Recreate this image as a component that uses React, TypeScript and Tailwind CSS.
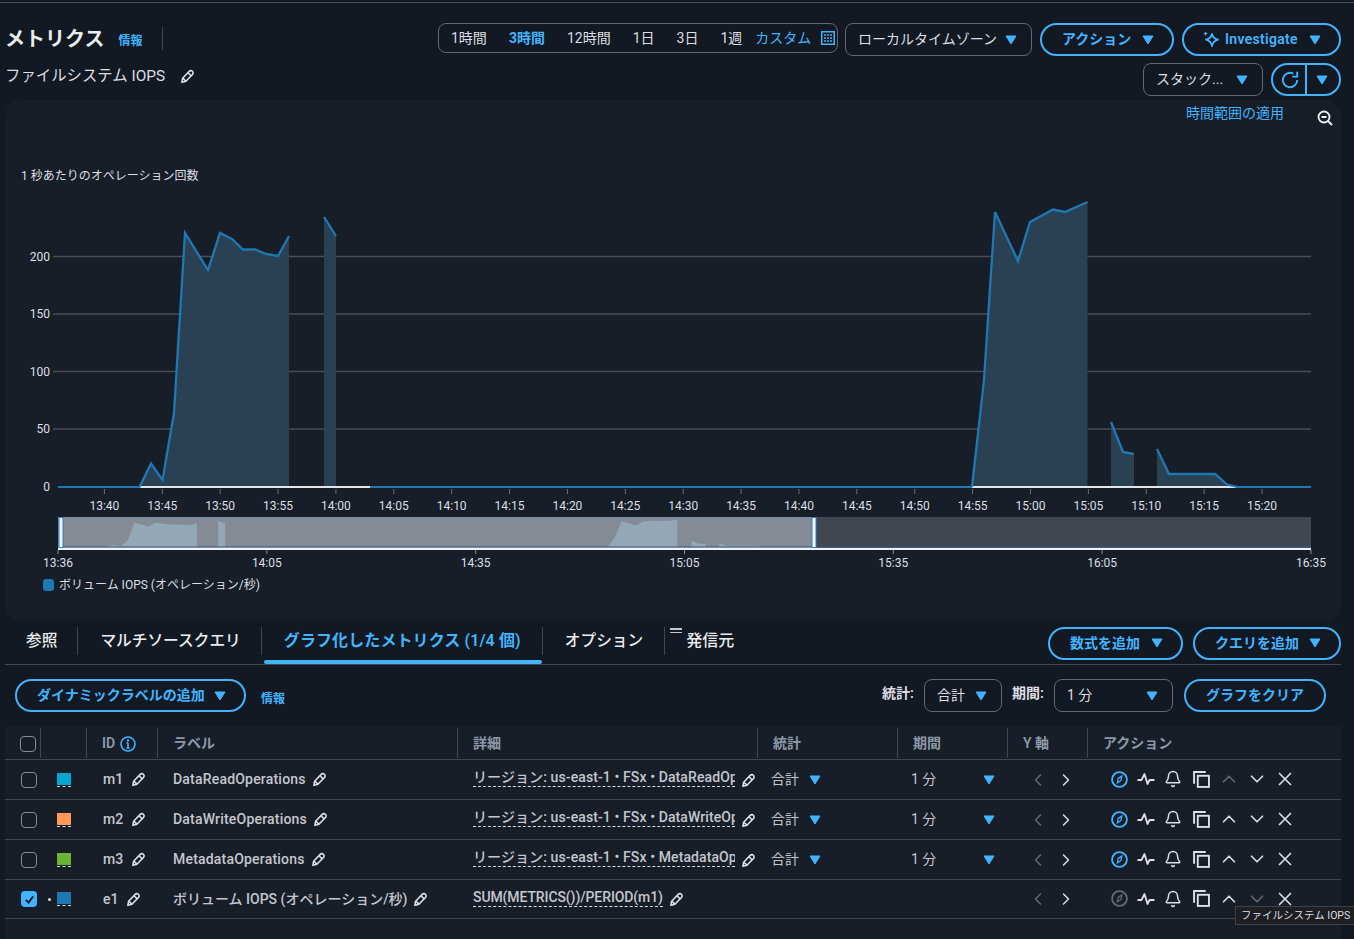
import { Bell, ChevronLeft, ChevronRight, ChevronUp, ChevronDown, X } from "lucide-react";

const baseY = 487;
const seriesA = [[139.5, 487], [151, 463.5], [162.5, 480], [174, 413], [185, 233], [208, 270], [220, 233], [232, 239], [243, 249.5], [255, 249.5], [266, 254], [278, 256], [289, 236]];
const seriesB = [[324, 217], [336, 236]];
const seriesC = [[972, 487], [984, 380], [995, 212], [1018, 261], [1030, 222], [1053, 209.5], [1065, 212], [1087.5, 202]];
const seriesD = [[1111, 422], [1123, 452], [1134, 454]];
const seriesE = [[1157, 449], [1169, 474], [1215, 474], [1227, 484.5], [1238, 487]];
const allSeries = [seriesA, seriesB, seriesC, seriesD, seriesE];

const line = (pts: number[][]) => pts.map((p) => p.join(",")).join(" ");
const area = (pts: number[][]) =>
  `${pts[0][0]},${baseY} ${line(pts)} ${pts[pts.length - 1][0]},${baseY}`;
const mini = (pts: number[][]) =>
  pts.map(([x, y]) => [58 + (x - 58) * 0.6016, 547 - (baseY - y) * 0.095]);

const mainTicks = ["13:40", "13:45", "13:50", "13:55", "14:00", "14:05", "14:10", "14:15", "14:20", "14:25", "14:30", "14:35", "14:40", "14:45", "14:50", "14:55", "15:00", "15:05", "15:10", "15:15", "15:20"];
const miniTicks = ["13:36", "14:05", "14:35", "15:05", "15:35", "16:05", "16:35"];
const gridLines = [
  { label: "200", y: 256.5 },
  { label: "150", y: 314 },
  { label: "100", y: 371.5 },
  { label: "50", y: 429 },
  { label: "0", y: 487 },
];

function Caret({ className = "" }: { className?: string }) {
  return (
    <svg viewBox="0 0 12 10" className={`w-[12px] h-[10px] shrink-0 ${className}`}>
      <path d="M1 1h10L6 9z" fill="#42b4ff" stroke="#42b4ff" strokeLinejoin="round" />
    </svg>
  );
}

function Edit({ className = "" }: { className?: string }) {
  return (
    <svg viewBox="0 0 16 16" className={`w-[15px] h-[15px] shrink-0 ${className}`} fill="none" stroke="#dedee3" strokeWidth="1.7" strokeLinejoin="round">
      <path d="M2 14.200 2.800 9.800 9.800 2.500a2.300 2.300 0 0 1 3.500 3.300L6.300 13z" />
      <path d="M2.800 9.800 6.300 13M8.500 4l3.500 3.300" />
    </svg>
  );
}

function PillButton({ label, width }: { label: string; width: string }) {
  return (
    <button className={`${width} h-[33px] shrink-0 flex items-center justify-between pl-[20px] pr-[18px] rounded-full border-2 border-[#42b4ff] text-[#42b4ff] text-[14px] font-semibold`}>
      <span className="whitespace-nowrap">{label}</span>
      <Caret />
    </button>
  );
}

function Select({ label, width }: { label: string; width: string }) {
  return (
    <div className={`${width} h-[33px] shrink-0 flex items-center justify-between pl-[12px] pr-[14px] rounded-lg border border-[#656871] text-[#dedee3] text-[14px]`}>
      <span className="whitespace-nowrap">{label}</span>
      <Caret />
    </div>
  );
}

function Divider({ className = "" }: { className?: string }) {
  return <div className={`w-px h-[28px] mb-[3px] bg-[#424650] shrink-0 ${className}`} />;
}

function Compass({ disabled }: { disabled?: boolean }) {
  const color = disabled ? "#656871" : "#42b4ff";
  return (
    <svg viewBox="0 0 16 16" className="w-[17px] h-[17px]" fill="none" stroke={color} strokeWidth="1.7">
      <circle cx="8" cy="8" r="7" />
      <path d="M10.200 4.600 9.400 8.900 6 11.200l.7-4.200z" strokeWidth="1.200" />
    </svg>
  );
}

function Pulse() {
  return (
    <svg viewBox="0 0 18 14" className="w-[18px] h-[14px]" fill="none" stroke="#dedee3" strokeWidth="1.8">
      <path d="M0.500 8h4l3-6 3 10 2-4h5" strokeLinejoin="round" />
    </svg>
  );
}

function CopyIcon() {
  return (
    <svg viewBox="0 0 16 16" className="w-[17px] h-[17px]" fill="none" stroke="#dedee3" strokeWidth="1.800">
      <path d="M1 12V1h11" />
      <rect x="4.500" y="4.500" width="10.500" height="10.500" />
    </svg>
  );
}

function Checkbox({ checked }: { checked?: boolean }) {
  if (checked) {
    return (
      <div className="w-[16px] h-[16px] rounded-[4px] bg-[#42b4ff] flex items-center justify-center">
        <svg viewBox="0 0 12 12" className="w-[11px] h-[11px]" fill="none" stroke="#0f141a" strokeWidth="2">
          <path d="M2 6.500 5 9.500 10 2.500" />
        </svg>
      </div>
    );
  }
  return <div className="w-[16px] h-[16px] rounded-[4px] border-[1.5px] border-[#8c8c94]" />;
}

const columns = "grid grid-cols-[36px_46px_71px_300px_300px_140px_110px_80px_253px]";

type Row = {
  id: string;
  color: string;
  label: string;
  detail: string;
  up?: boolean;
};

const rows: Row[] = [
  { id: "m1", color: "bg-[#06a6cf]", label: "DataReadOperations", detail: "リージョン: us-east-1 • FSx • DataReadOp", up: true },
  { id: "m2", color: "bg-[#ff9859]", label: "DataWriteOperations", detail: "リージョン: us-east-1 • FSx • DataWriteOp" },
  { id: "m3", color: "bg-[#6bb334]", label: "MetadataOperations", detail: "リージョン: us-east-1 • FSx • MetadataOp" },
];

function Arrows() {
  return (
    <div className="flex items-center justify-center gap-[8px] pl-[8px]">
      <ChevronLeft className="w-[20px] h-[20px] text-[#656871]" strokeWidth={1.8} />
      <ChevronRight className="w-[20px] h-[20px] text-[#dedee3]" strokeWidth={1.8} />
    </div>
  );
}

function Actions({ row, last }: { row?: Row; last?: boolean }) {
  return (
    <div className="flex items-center pl-[17px] -mt-px">
      <div className="w-[28px] flex justify-center"><Compass disabled={last} /></div>
      <div className="w-[26px] flex justify-center"><Pulse /></div>
      <div className="w-[28px] flex justify-center"><Bell className="w-[18px] h-[18px] text-[#dedee3]" strokeWidth={2} /></div>
      <div className="w-[28px] flex justify-center"><CopyIcon /></div>
      <div className="w-[28px] flex justify-center">
        <ChevronUp className={`w-[22px] h-[22px] ${row?.up ? "text-[#656871]" : "text-[#dedee3]"}`} strokeWidth={1.8} />
      </div>
      <div className="w-[28px] flex justify-center">
        <ChevronDown className={`w-[22px] h-[22px] ${last ? "text-[#656871]" : "text-[#dedee3]"}`} strokeWidth={1.8} />
      </div>
      <div className="w-[28px] flex justify-center"><X className="w-[22px] h-[22px] text-[#dedee3]" strokeWidth={1.8} /></div>
    </div>
  );
}

function Swatch({ color }: { color: string }) {
  return (
    <div className="flex flex-col items-center w-[14px]">
      <div className={`w-[14px] h-[12px] ${color}`} />
      <div className="w-[14px] mt-px border-b border-dashed border-[#dedee3]" />
    </div>
  );
}

function Chart() {
  return (
    <svg viewBox="5 195 1336 375" className="w-[1336px] h-[375px] block" fontSize="12">
      {gridLines.map((g) => (
        <g key={g.label}>
          {g.label !== "0" && <line x1="53" x2="1311" y1={g.y} y2={g.y} stroke="#4b4d52" strokeWidth="1.3" />}
          <text x="50" y={g.y + 4} textAnchor="end" fill="#dedee3">{g.label}</text>
        </g>
      ))}
      {allSeries.map((s, i) => (
        <polygon key={i} points={area(s)} fill="#2a4053" />
      ))}
      <line x1="58" x2="140" y1={baseY} y2={baseY} stroke="#1f77b4" strokeWidth="2" />
      <line x1="140" x2="370" y1={baseY} y2={baseY} stroke="#e5e5e5" strokeWidth="2" />
      <line x1="370" x2="972" y1={baseY} y2={baseY} stroke="#1f77b4" strokeWidth="2" />
      <line x1="972" x2="1236" y1={baseY} y2={baseY} stroke="#e5e5e5" strokeWidth="2" />
      <line x1="1236" x2="1311" y1={baseY} y2={baseY} stroke="#1f77b4" strokeWidth="2" />
      {allSeries.map((s, i) => (
        <polyline key={i} points={line(s)} fill="none" stroke="#1f77b4" strokeWidth="2.300" />
      ))}
      {mainTicks.map((t, i) => {
        const x = 104.4 + i * 57.88;
        return (
          <g key={t}>
            <line x1={x} x2={x} y1="489" y2="494" stroke="#6b6e75" />
            <text x={x} y="510" textAnchor="middle" fill="#dedee3">{t}</text>
          </g>
        );
      })}

      <rect x="58" y="517" width="1253" height="31" fill="#414750" />
      <rect x="58" y="517" width="757" height="31" fill="#858b94" />
      {allSeries.map((s, i) => (
        <polygon key={i} points={`${mini(s)[0][0]},547 ${line(mini(s))} ${mini(s)[s.length - 1][0]},547`} fill="#93a7b6" />
      ))}
      <rect x="58" y="546.500" width="1253" height="1.500" fill="#3f5a78" />
      <rect x="58" y="548" width="1253" height="2" fill="#f2f2f2" />
      <rect x="58.500" y="517.500" width="756" height="30" fill="none" stroke="#6f8fb0" />
      <rect x="59" y="517.500" width="4" height="30" fill="#f4f6f8" stroke="#2f7fd0" />
      <rect x="812" y="517.500" width="4" height="30" fill="#f4f6f8" stroke="#2f7fd0" />
      {miniTicks.map((t, i) => {
        const x = 58 + i * 208.83;
        return (
          <g key={t}>
            <line x1={x} x2={x} y1="550" y2="554" stroke="#8a8d93" />
            <text x={x} y="567" textAnchor="middle" fill="#dedee3">{t}</text>
          </g>
        );
      })}
    </svg>
  );
}

export default function App() {
  return (
    <div className="relative h-[939px] w-[1354px] overflow-hidden bg-[#131922] pt-[2px] text-[#dedee3] [font-family:'Roboto','Noto_Sans_CJK_JP',sans-serif]">
      <div className="h-px bg-[#4a4c55]" />

      <div className="ml-[5px] w-[1336px]">
        {/* header */}
        <div className="mt-[20px] flex items-start h-[33px]">
          <div className="w-[433px] flex items-start">
            <h1 className="mt-px text-[20px] leading-[30px] font-bold text-[#eaeded] whitespace-nowrap">メトリクス</h1>
            <a className="ml-[14px] mt-[9px] text-[12px] leading-[18px] font-semibold text-[#42b4ff]">情報</a>
            <div className="ml-[20px] mt-[4px] w-px h-[23px] bg-[#424650]" />
          </div>
          <div className="w-[400px] h-[30px] flex items-center gap-[22px] pl-[12px] rounded-lg border border-[#656871] text-[14px] whitespace-nowrap">
            <span>1時間</span>
            <span className="font-bold text-[#42b4ff]">3時間</span>
            <span>12時間</span>
            <span>1日</span>
            <span>3日</span>
            <span>1週</span>
            <span className="-ml-[9px] text-[#42b4ff]">カスタム</span>
            <svg viewBox="0 0 14 14" className="-ml-[12px] w-[14px] h-[14px] shrink-0" fill="none" stroke="#42b4ff">
              <rect x="0.750" y="0.750" width="12.500" height="12.500" strokeWidth="1.500" />
              <path d="M3 4h8M3 7h8M3 10h8" strokeWidth="1.500" strokeDasharray="2 1" />
            </svg>
          </div>
          <Select label="ローカルタイムゾーン" width="ml-[7px] w-[187px]" />
          <div className="ml-[8px]"><PillButton label="アクション" width="w-[134px]" /></div>
          <button className="ml-[8px] w-[159px] h-[33px] flex items-center pl-[19px] pr-[18px] rounded-full border-2 border-[#42b4ff] text-[#42b4ff] text-[14px] font-semibold">
            <svg viewBox="0 0 17 17" className="w-[17px] h-[17px] shrink-0" fill="none" stroke="#42b4ff" strokeWidth="1.800">
              <path d="M9 3c.8 3.400 2.200 4.800 6 5.700-3.800.9-5.200 2.300-6 6.300-.8-4-2.200-5.400-6-6.300 3.800-.9 5.200-2.300 6-5.700z" strokeLinejoin="round" />
              <path d="M2.500 1v3.500M.8 2.700h3.400" strokeWidth="1.200" />
            </svg>
            <span className="ml-[5px] tracking-[0.3px]">Investigate</span>
            <Caret className="ml-auto" />
          </button>
        </div>

        <div className="mt-[7px] flex items-center h-[33px]">
          <span className="text-[15.4px] -mt-[6px] text-[#dedee3] whitespace-nowrap">ファイルシステム IOPS</span>
          <Edit className="ml-[15px] -mt-[6px]" />
          <div className="ml-auto"><Select label="スタック..." width="w-[120px]" /></div>
          <div className="ml-[8px] w-[70px] h-[33px] flex items-stretch rounded-full border-2 border-[#42b4ff]">
            <div className="w-[34px] flex items-center justify-center border-r-2 border-[#42b4ff]">
              <svg viewBox="0 0 18 18" className="w-[20px] h-[20px] ml-[2px]" fill="none" stroke="#42b4ff" strokeWidth="1.700">
                <path d="M15.500 9A6.500 6.500 0 1 1 12 3.200" />
                <path d="M15.500 1.500V6h-4.500" />
              </svg>
            </div>
            <div className="flex-1 flex items-center justify-center pr-[3px]"><Caret /></div>
          </div>
        </div>

        {/* chart panel */}
        <section className="mt-[4px] h-[521px] rounded-2xl bg-[#171e28] overflow-hidden">
          <div className="h-[27px] flex items-center justify-end">
            <a className="text-[14px] text-[#42b4ff]">時間範囲の適用</a>
            <svg viewBox="0 0 16 16" className="ml-[33px] mr-[8px] mt-[9px] w-[16px] h-[16px]" fill="none" stroke="#f2f3f3" strokeWidth="1.800">
              <circle cx="7" cy="7" r="5.500" />
              <path d="M4.500 7h5M11 11l4 4" />
            </svg>
          </div>
          <div className="mt-[39px] h-[20px] pl-[16px] text-[12px] leading-[20px] text-[#dedee3]">1 秒あたりのオペレーション回数</div>
          <div className="mt-[9px]"><Chart /></div>
          <div className="mt-[6px] ml-[38px] flex items-center gap-[5px] text-[12px] leading-[18px]">
            <div className="w-[11px] h-[12px] rounded-[3px] bg-[#1f77b4]" />
            <span>ボリューム IOPS (オペレーション/秒)</span>
          </div>
        </section>

        {/* tabs */}
        <div className="relative h-[44px] flex items-center border-b border-[#424650] text-[15.7px] font-medium text-[#eaeded]">
          <span className="ml-[21px] mb-[4px]">参照</span>
          <Divider className="ml-[20px]" />
          <span className="ml-[22px] mb-[4px] whitespace-nowrap">マルチソースクエリ</span>
          <Divider className="ml-[20px]" />
          <div className="relative ml-px w-[279px] h-full flex items-center justify-center text-[16px] tracking-[0.1px] text-[#42b4ff] font-semibold">
            <span className="whitespace-nowrap mb-[4px]">グラフ化したメトリクス (1/4 個)</span>
            <div className="absolute left-px right-0 bottom-0 h-[4px] rounded-full bg-[#42b4ff]" />
          </div>
          <Divider />
          <span className="ml-[22px] mb-[4px] whitespace-nowrap">オプション</span>
          <Divider className="ml-[21px]" />
          <div className="ml-[5px] w-[12px] mb-[24px] flex flex-col gap-[2px]">
            <div className="h-[2px] bg-[#c6c6cd]" />
            <div className="h-[1px] bg-[#c6c6cd]" />
          </div>
          <span className="ml-[4px] mb-[4px] text-[16px] whitespace-nowrap">発信元</span>
          <div className="ml-auto flex gap-[10px] mt-[1px] font-normal">
            <PillButton label="数式を追加" width="w-[135px]" />
            <PillButton label="クエリを追加" width="w-[148px]" />
          </div>
        </div>

        {/* controls */}
        <div className="mt-[14px] h-[33px] flex items-center">
          <div className="ml-[10px]"><PillButton label="ダイナミックラベルの追加" width="w-[231px]" /></div>
          <a className="ml-[15px] mt-[7px] text-[12px] font-semibold text-[#42b4ff]">情報</a>
          <span className="ml-auto w-[32px] text-[14px] font-semibold mb-[4px] whitespace-nowrap">統計:</span>
          <Select label="合計" width="ml-[10px] w-[78px]" />
          <span className="ml-[10px] w-[32px] text-[14px] font-semibold mb-[4px] whitespace-nowrap">期間:</span>
          <Select label="1 分" width="ml-[10px] w-[119px]" />
          <button className="ml-[11px] mr-[15px] w-[142px] h-[33px] rounded-full border-2 border-[#42b4ff] text-[#42b4ff] text-[14px] font-semibold">グラフをクリア</button>
        </div>

        {/* table */}
        <div className="mt-[14px] h-[300px] bg-[#171e28]">
          <div className={`${columns} h-[34px] items-center border-b border-[#424650] text-[14px] font-semibold text-[#8d99a8]`}>
            <div className="h-[30px] flex items-center pt-[2px] pl-[15px] border-r border-[#424650]"><Checkbox /></div>
            <div className="h-[30px] border-r border-[#424650]" />
            <div className="h-[30px] flex items-center pt-[2px] pl-[15px] border-r border-[#424650]">
              <span>ID</span>
              <svg viewBox="0 0 16 16" className="ml-[5px] w-[16px] h-[16px]" fill="none" stroke="#42b4ff" strokeWidth="1.600">
                <circle cx="8" cy="8" r="7" />
                <path d="M8 7v5M6.500 12h3M6.500 7H8" />
                <circle cx="8" cy="4.500" r="0.500" />
              </svg>
            </div>
            <div className="h-[30px] flex items-center pt-[2px] pl-[15px] border-r border-[#424650]">ラベル</div>
            <div className="h-[30px] flex items-center pt-[2px] pl-[15px] border-r border-[#424650]">詳細</div>
            <div className="h-[30px] flex items-center pt-[2px] pl-[15px] border-r border-[#424650]">統計</div>
            <div className="h-[30px] flex items-center pt-[2px] pl-[15px] border-r border-[#424650]">期間</div>
            <div className="h-[30px] flex items-center pt-[2px] pl-[15px] border-r border-[#424650]">Y 軸</div>
            <div className="h-[30px] flex items-center pt-[2px] pl-[15px]">アクション</div>
          </div>

          {rows.map((row) => (
            <div key={row.id} className={`${columns} h-[40px] items-center border-b border-[#424650] text-[14px] font-medium text-[#c6c6cd]`}>
              <div className="pl-[16px]"><Checkbox /></div>
              <div className="pl-[16px]"><Swatch color={row.color} /></div>
              <div className="pl-[16px] flex items-center gap-[8px]">
                <span>{row.id}</span>
                <Edit />
              </div>
              <div className="pl-[15px] flex items-center gap-[6px] tracking-[0.2px]">
                <span>{row.label}</span>
                <Edit />
              </div>
              <div className="pl-[15px] flex items-center gap-[6px] -mt-[4px] tracking-[0.1px]">
                <span className="w-[262px] overflow-hidden whitespace-nowrap border-b border-dashed border-[#dedee3] leading-[18px]">{row.detail}</span>
                <Edit className="mt-[5px]" />
              </div>
              <div className="pl-[13px] flex items-center gap-[10px] font-normal">
                <span>合計</span>
                <Caret />
              </div>
              <div className="pl-[13px] pr-[13px] flex items-center justify-between font-normal">
                <span>1 分</span>
                <Caret />
              </div>
              <Arrows />
              <Actions row={row} />
            </div>
          ))}

          <div className={`${columns} h-[39px] items-center border-b border-[#424650] text-[14px] font-medium text-[#c6c6cd]`}>
            <div className="pl-[16px]"><Checkbox checked /></div>
            <div className="pl-[7px] flex items-center gap-[6px]">
              <div className="w-[3px] h-[3px] rounded-full bg-[#dedee3]" />
              <Swatch color="bg-[#1f77b4]" />
            </div>
            <div className="pl-[16px] flex items-center gap-[8px]">
              <span>e1</span>
              <Edit />
            </div>
            <div className="pl-[15px] flex items-center gap-[6px]">
              <span className="whitespace-nowrap">ボリューム IOPS (オペレーション/秒)</span>
              <Edit />
            </div>
            <div className="col-span-3 pl-[15px] flex items-center gap-[6px] -mt-[4px]">
              <span className="border-b border-dashed border-[#dedee3] leading-[18px] tracking-[-0.1px]">SUM(METRICS())/PERIOD(m1)</span>
              <Edit className="mt-[5px]" />
            </div>
            <Arrows />
            <Actions last />
          </div>
        </div>
      </div>

      <div className="absolute left-[1235px] top-[906px] w-[125px] h-[19px] pl-[5px] flex items-center bg-[#1d1f22] border border-[#3f4145] text-[10.5px] text-[#dedee3] whitespace-nowrap">
        ファイルシステム IOPS
      </div>
    </div>
  );
}
